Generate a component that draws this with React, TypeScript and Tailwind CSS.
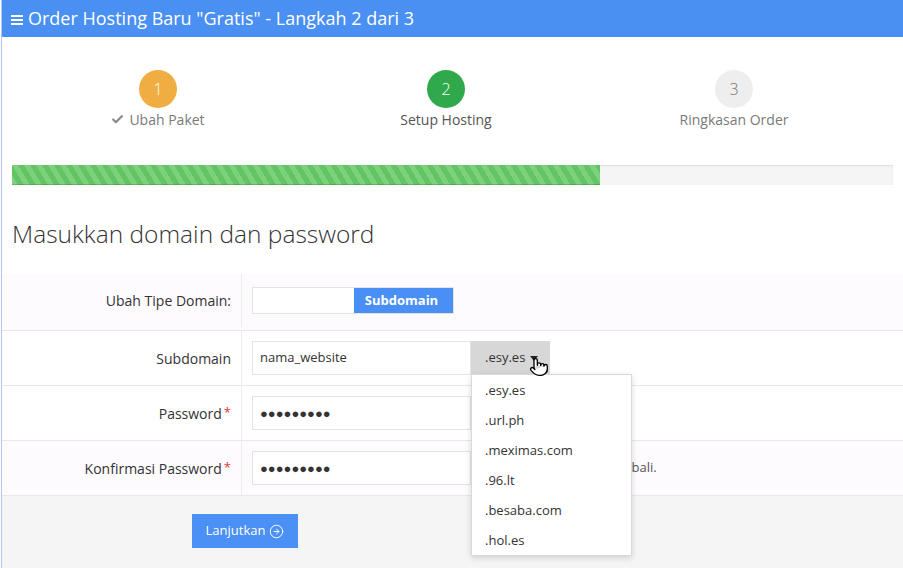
import { Check, CircleArrowRight, Pointer } from 'lucide-react';

const domains = ['.esy.es', '.url.ph', '.meximas.com', '.96.lt', '.besaba.com', '.hol.es'];

type Step = { num: string; label: string; circle: string; text: string; done?: boolean };

const steps: Step[] = [
  { num: '1', label: 'Ubah Paket', circle: 'bg-[#f0ad42] text-white', text: 'text-[#7a7a7a]', done: true },
  { num: '2', label: 'Setup Hosting', circle: 'bg-[#2fa94b] text-white', text: 'text-[#555]' },
  { num: '3', label: 'Ringkasan Order', circle: 'bg-[#eeeeee] text-[#777]', text: 'text-[#7a7a7a]' },
];

function FormRow({
  label,
  required,
  shaded,
  first,
  children,
}: {
  label: string;
  required?: boolean;
  shaded?: boolean;
  first?: boolean;
  children: React.ReactNode;
}) {
  return (
    <div
      className={`flex border-b border-[#e8e8e8] ${first ? 'h-[57px] pb-[3px]' : 'h-[55px]'} ${
        shaded ? 'bg-[#fdfbfe]' : 'bg-white'
      }`}
    >
      <div className="w-[240px] shrink-0 border-r border-[#ececec] flex items-center justify-end pr-[10px] text-[14px] text-[#333]">
        {label}
        {required && <span className="text-[#e53935] ml-[2px] text-[13px]">*</span>}
      </div>
      <div className="flex-1 flex items-center pl-[10px]">{children}</div>
    </div>
  );
}

export default function App() {
  return (
    <div className="min-h-[568px] bg-white pl-px font-['Open_Sans',sans-serif]">
      <div className="min-h-[568px] border-l border-[#b3cbf4] flex flex-col">
        <div className="h-[37px] bg-[#4a8ff2] flex items-center pl-[9px] text-white text-[18px]">
          <svg width="12" height="10" viewBox="0 0 12 10" className="mr-[5px] mt-[2px]" fill="white">
            <rect x="0" y="0" width="12" height="2" />
            <rect x="0" y="4" width="12" height="2" />
            <rect x="0" y="8" width="12" height="2" />
          </svg>
          Order Hosting Baru "Gratis" - Langkah 2 dari 3
        </div>

        <div className="px-[10px]">
          <div className="flex pl-[2px] pt-[33px]">
            {steps.map((s) => (
              <div key={s.num} className="w-[288px] flex flex-col items-center">
                <div
                  className={`w-[38px] h-[38px] rounded-full flex items-center justify-center text-[16px] font-light ${s.circle}`}
                >
                  {s.num}
                </div>
                <div className={`mt-[1px] text-[14px] flex items-center ${s.text}`}>
                  {s.done && <Check className="w-[13px] h-[13px] mr-[5px] text-[#888]" strokeWidth={4} />}
                  {s.label}
                </div>
              </div>
            ))}
          </div>

          <div className="mt-[35px] h-[20px] bg-[#f5f5f5] shadow-[inset_0_1px_2px_rgba(0,0,0,0.1)] flex">
            <div className="w-[588px] h-full bg-[repeating-linear-gradient(59deg,#7dd17d_0_5px,#62c462_5px_10.3px)] shadow-[inset_0_-1px_0_rgba(0,0,0,0.15)]" />
          </div>

          <h2 className="mt-[31px] text-[24.5px] font-light text-[#333] leading-[36px]">Masukkan domain dan password</h2>
        </div>

        <div className="mt-[22px]">
          <FormRow label="Ubah Tipe Domain:" shaded first>
            <div className="flex h-[27px] border border-[#e3e3e3]">
              <div className="w-[101px] bg-white" />
              <div className="w-[99px] bg-[#4a8ff5] text-white font-bold text-[13px] flex items-center justify-center pr-[4px]">
                Subdomain
              </div>
            </div>
          </FormRow>

          <FormRow label="Subdomain">
            <div className="relative flex">
              <div className="w-[219px] h-[34px] border border-[#e3e3e3] flex items-center pl-[7px] text-[13px] text-[#333]">
                nama_website
              </div>
              <div className="w-[79px] h-[34px] bg-[#d7d7d7] flex items-center pl-[14px] text-[13px] text-[#333]">
                .esy.es
                <span className="ml-[5px] w-0 h-0 border-l-[4px] border-r-[4px] border-t-[5px] border-l-transparent border-r-transparent border-t-[#222]" />
              </div>
              <Pointer
                className="absolute left-[277px] top-[15px] w-[20px] h-[22px] z-20"
                fill="white"
                stroke="black"
                strokeWidth={1.6}
              />
              <div className="absolute left-[219px] top-[33px] w-[161px] bg-white border border-[#d9d9d9] shadow-[0_2px_6px_rgba(0,0,0,0.15)] z-10">
                {domains.map((d) => (
                  <div key={d} className="h-[30px] flex items-center pl-[13px] pt-[2px] text-[13px] text-[#333]">
                    {d}
                  </div>
                ))}
              </div>
            </div>
          </FormRow>

          <FormRow label="Password" required>
            <div className="w-[219px] h-[34px] border border-[#e3e3e3] flex items-center pl-[7px] pt-[2px] text-[13px] text-[#333]">
              ●●●●●●●●●
            </div>
          </FormRow>

          <FormRow label="Konfirmasi Password" required shaded>
            <div className="w-[219px] h-[34px] border border-[#e3e3e3] bg-white flex items-center pl-[7px] pt-[2px] text-[13px] text-[#333]">
              ●●●●●●●●●
            </div>
            <span className="ml-[2px] text-[13px] text-[#555]">Ketik ulang password kembali.</span>
          </FormRow>
        </div>

        <div className="flex-1 bg-[#f5f5f5] pt-[18px] pl-[190px]">
          <button className="w-[106px] h-[34px] bg-[#4a90f5] text-white text-[13px] flex items-center justify-center">
            Lanjutkan
            <CircleArrowRight className="w-[15px] h-[15px] ml-[4px]" strokeWidth={1.6} />
          </button>
        </div>
      </div>
    </div>
  );
}
